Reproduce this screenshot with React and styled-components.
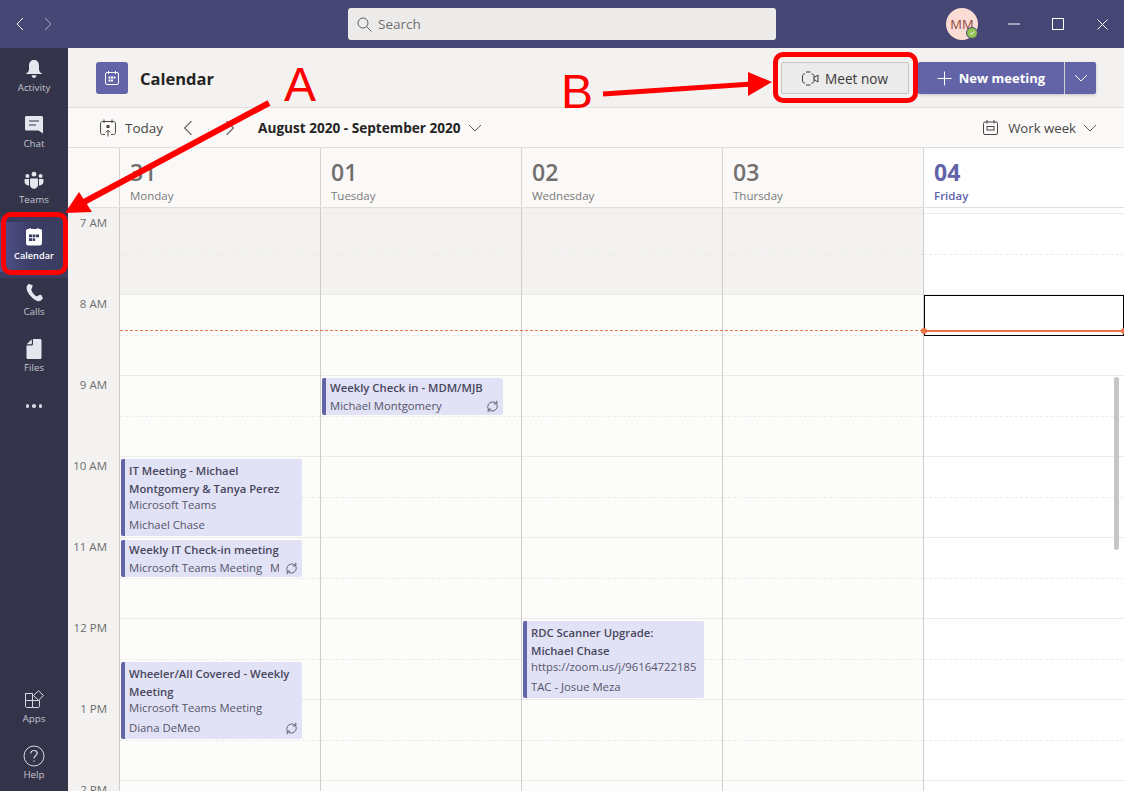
import React from 'react';
import styled, { createGlobalStyle } from 'styled-components';

const GlobalStyle = createGlobalStyle`
  html, body { margin: 0; padding: 0; }
  body {
    font-family: "Open Sans", "Noto Sans", "Liberation Sans", sans-serif;
    overflow: hidden;
  }
`;

const Page = styled.div`
  position: relative;
  width: 1124px;
  height: 791px;
  overflow: hidden;
  display: flex;
  flex-direction: column;
  background: #f3f2f1;
`;

const TitleBar = styled.header`
  height: 48px;
  flex: none;
  background: #464775;
  display: grid;
  grid-template-columns: 1fr 428px 1fr;
  align-items: center;
`;

const HistoryNav = styled.div`
  display: flex;
  gap: 14px;
  padding-left: 13px;
  align-items: center;
`;

const SearchBox = styled.div`
  height: 32px;
  background: #ecebea;
  border-radius: 3px;
  display: flex;
  align-items: center;
  gap: 6px;
  padding-left: 9px;
  font-size: 13.5px;
  color: #6e6e6e;
`;

const TitleRight = styled.div`
  display: flex;
  justify-content: flex-end;
  align-items: center;
`;

const Avatar = styled.div`
  position: relative;
  width: 32px;
  height: 32px;
  border-radius: 50%;
  background: #fbdcd4;
  color: #8e4a3e;
  font-size: 13px;
  display: flex;
  align-items: center;
  justify-content: center;
  margin-right: 14px;
`;

const StatusBadge = styled.span`
  position: absolute;
  right: 0;
  bottom: 1px;
  width: 10px;
  height: 10px;
  border-radius: 50%;
  background: #92c353;
  border: 1px solid #464775;
  display: flex;
  align-items: center;
  justify-content: center;
`;

const WindowButton = styled.div`
  width: 44px;
  height: 48px;
  display: flex;
  align-items: center;
  justify-content: center;
`;

const Body = styled.div`
  flex: 1;
  display: flex;
  min-height: 0;
`;

const Rail = styled.nav`
  width: 68px;
  flex: none;
  background: #33344a;
  display: flex;
  flex-direction: column;
  justify-content: space-between;
`;

const RailGroup = styled.div`
  display: flex;
  flex-direction: column;
  gap: ${(p) => p.$gap}px;
  padding-top: ${(p) => p.$top || 0}px;
`;

const RailItem = styled.div`
  height: 50px;
  box-sizing: border-box;
  padding-top: 5px;
  display: flex;
  flex-direction: column;
  align-items: center;
  color: ${(p) => (p.$active ? '#ffffff' : '#c4c4cf')};
  background: ${(p) => (p.$active ? 'linear-gradient(90deg, #50528c 0%, #3d3e66 45%, #3a3b5e 100%)' : 'none')};
  box-shadow: ${(p) => (p.$active ? '0 -6px 0 #3a3b5e, 0 6px 0 #3a3b5e' : 'none')};
  font-size: ${(p) => (p.$active ? 9.2 : 9.8)}px;
  font-weight: ${(p) => (p.$active ? 600 : 400)};
  line-height: 12px;
`;

const RailIcon = styled.div`
  height: 20px;
  margin-bottom: 3px;
  display: flex;
  align-items: center;
  justify-content: center;
`;

const MoreDots = styled.div`
  height: 40px;
  display: flex;
  align-items: center;
  justify-content: center;
  gap: 3px;
  margin-top: -4px;
`;

const Dot = styled.span`
  width: 3.5px;
  height: 3.5px;
  border-radius: 50%;
  background: #d6d6de;
`;

const Main = styled.main`
  flex: 1;
  min-width: 0;
  display: flex;
  flex-direction: column;
`;

const PageHeader = styled.div`
  height: 60px;
  box-sizing: border-box;
  flex: none;
  border-bottom: 1px solid #e1dfdd;
  display: flex;
  align-items: center;
  padding: 1px 28px 0 28px;
`;

const AppTile = styled.div`
  width: 32px;
  height: 32px;
  background: #6264a7;
  border-radius: 3px;
  display: flex;
  align-items: center;
  justify-content: center;
  margin-right: 12px;
`;

const PageTitle = styled.h1`
  margin: 0;
  font-size: 16.5px;
  font-weight: 700;
  color: #252423;
  flex: 1;
`;

const MeetNow = styled.button`
  width: 128px;
  height: 32px;
  box-sizing: border-box;
  border: 1px solid #c8c6c4;
  border-radius: 2px;
  background: #ebebeb;
  color: #3b3a39;
  font: 500 13.6px "Open Sans", sans-serif;
  display: flex;
  align-items: center;
  justify-content: center;
  gap: 6px;
  margin-right: 9px;
  padding: 0;
`;

const NewMeeting = styled.button`
  width: 146px;
  height: 32px;
  border: 0;
  border-radius: 2px 0 0 2px;
  background: #6264a7;
  color: #fff;
  font: 700 13px "Open Sans", sans-serif;
  display: flex;
  align-items: center;
  justify-content: center;
  gap: 7px;
  padding: 0;
  box-shadow: 0 1px 3px rgba(0, 0, 0, 0.2);
`;

const NewMeetingMenu = styled.button`
  width: 31px;
  height: 32px;
  border: 0;
  margin-left: 1px;
  border-radius: 0 2px 2px 0;
  background: #6264a7;
  display: flex;
  align-items: center;
  justify-content: center;
  padding: 0;
  box-shadow: 0 1px 3px rgba(0, 0, 0, 0.2);
`;

const Toolbar = styled.div`
  height: 40px;
  box-sizing: border-box;
  flex: none;
  background: #faf9f8;
  border-bottom: 1px solid #e1dfdd;
  display: flex;
  align-items: center;
  padding: 0 27px 0 32px;
  font-size: 13.5px;
  color: #484644;
`;

const TodayLabel = styled.span`
  margin-left: 9px;
  margin-right: 17px;
`;

const RangeLabel = styled.span`
  font-weight: 700;
  font-size: 13.6px;
  color: #252423;
  margin-left: 20px;
  margin-right: 7px;
`;

const ToolbarSpacer = styled.div`
  flex: 1;
`;

const ArrowGap = styled.span`
  width: 26px;
`;

const ViewLabel = styled.span`
  font-size: 13.2px;
  margin: 0 7px 0 10px;
`;

const DayHeaderRow = styled.div`
  height: 60px;
  box-sizing: border-box;
  flex: none;
  display: grid;
  grid-template-columns: 51px repeat(5, 201px);
  border-bottom: 1px solid #e1dfdd;
  background: #faf9f8;
`;

const DayHead = styled.div`
  border-left: 1px solid #d6d4d2;
  padding: 8px 0 0 10px;
  background: ${(p) => (p.$today ? '#ffffff' : '#faf9f8')};
  color: ${(p) => (p.$today ? '#6264a7' : '#7a7977')};
`;

const DayNumber = styled.div`
  font-size: 23px;
  line-height: 32px;
  font-weight: ${(p) => (p.$today ? 700 : 550)};
  color: ${(p) => (p.$today ? '#6264a7' : '#706f6e')};
`;

const DayName = styled.div`
  font-size: 11.5px;
  line-height: 16px;
  font-weight: ${(p) => (p.$today ? 600 : 400)};
`;

const Grid = styled.div`
  position: relative;
  flex: 1;
  min-height: 0;
  overflow: hidden;
  display: grid;
  grid-template-columns: 51px repeat(5, 201px);
`;

const TimeColumn = styled.div`
  padding-top: 5px;
  background: #f3f2f1;
`;

const TimeLabel = styled.div`
  height: 81px;
  box-sizing: border-box;
  padding: 2px 12px 0 0;
  text-align: right;
  font-size: 11.5px;
  line-height: 16px;
  color: #6e6d6c;
`;

const DayColumn = styled.div`
  position: relative;
  border-left: 1px solid #d0cecc;
  background: ${(p) => (p.$today ? '#ffffff' : '#fcfcfb')};
`;

const LeadIn = styled.div`
  height: 5px;
  background: ${(p) => (p.$off ? '#f3f2f1' : 'transparent')};
`;

const HourSlot = styled.div`
  height: 81px;
  box-sizing: border-box;
  border-top: 1px solid #edebe9;
  background: ${(p) => (p.$off ? '#f3f2f1' : 'transparent')};
`;

const HalfLine = styled.div`
  height: 40px;
  border-bottom: 1px dashed #ecebe9;
`;

const Event = styled.div`
  position: absolute;
  left: 1px;
  top: ${(p) => p.$top}px;
  width: 181px;
  height: ${(p) => p.$height}px;
  box-sizing: border-box;
  background: #e2e2f6;
  border-left: 4px solid #6264a7;
  border-radius: 2px;
  padding: ${(p) => (p.$short ? 1 : 3)}px 4px 0 4px;
  color: #3f3f55;
  overflow: hidden;
`;

const EventTitle = styled.div`
  font-size: 11.3px;
  font-weight: 600;
  line-height: 18px;
  white-space: nowrap;
  color: #47475d;
`;

const EventLine = styled.div`
  font-size: 11.3px;
  line-height: 16px;
  margin-top: ${(p) => p.$gap || 0}px;
  display: flex;
  align-items: center;
  justify-content: space-between;
  gap: 6px;
  color: #55556a;
  margin-bottom: ${(p) => p.$after || 0}px;
`;

const Clip = styled.span`
  flex: 1;
  min-width: 0;
  overflow: hidden;
  white-space: nowrap;
`;

const NowDashed = styled.div`
  position: absolute;
  left: 52px;
  width: 803px;
  top: 122px;
  border-top: 1px dashed #e97548;
`;

const SelectedCell = styled.div`
  position: absolute;
  left: 0;
  right: 0;
  top: 87px;
  height: 41px;
  box-sizing: border-box;
  border: 1px solid #000;
  background: #fff;
`;

const NowSolid = styled.div`
  position: absolute;
  left: 0;
  right: 0;
  top: 122px;
  height: 2px;
  background: #e97548;
`;

const NowDot = styled.span`
  position: absolute;
  top: -2px;
  ${(p) => (p.$end ? 'right: -3px;' : 'left: -3px;')}
  width: 6px;
  height: 6px;
  border-radius: 50%;
  background: #e97548;
`;

const ScrollThumb = styled.div`
  position: absolute;
  right: 5px;
  top: 169px;
  width: 5px;
  height: 173px;
  border-radius: 3px;
  background: #c8c6c4;
`;

const Annotations = styled.svg`
  position: absolute;
  left: 0;
  top: 0;
  pointer-events: none;
`;

const CalloutBox = styled.div`
  position: absolute;
  left: ${(p) => p.$x}px;
  top: ${(p) => p.$y}px;
  width: ${(p) => p.$w}px;
  height: ${(p) => p.$h}px;
  box-sizing: border-box;
  border: 5px solid #ff0000;
  border-radius: 10px;
`;

const CalloutLetter = styled.span`
  position: absolute;
  left: ${(p) => p.$x}px;
  top: ${(p) => p.$y}px;
  font: 400 48px/48px "Liberation Sans", sans-serif;
  color: #ff0000;
`;

const Chevron = ({ dir = 'down', size = 14, color = '#605e5c' }) => {
  const paths = {
    down: 'M1 4 L7 10 L13 4',
    left: 'M10 1 L4 7 L10 13',
    right: 'M4 1 L10 7 L4 13',
  };
  return (
    <svg width={size} height={size} viewBox="0 0 14 14" fill="none">
      <path d={paths[dir]} stroke={color} strokeWidth="1" />
    </svg>
  );
};

const BellIcon = () => (
  <svg width="20" height="20" viewBox="0 0 20 20" fill="#e6e6ee">
    <path d="M10 1C6.6 1 5 3.6 5 6.8V10.5C5 12.5 3.6 13.4 1.6 15H18.4C16.4 13.4 15 12.5 15 10.5V6.8C15 3.6 13.4 1 10 1Z" />
    <path d="M7.6 16.2H12.4C12.2 18 11.2 19 10 19C8.8 19 7.8 18 7.6 16.2Z" />
  </svg>
);

const ChatIcon = () => (
  <svg width="20" height="20" viewBox="0 0 20 20">
    <path fill="#e6e6ee" d="M2.5 1H17.5C18.4 1 19 1.6 19 2.5V18.5L14.5 15.5H2.5C1.6 15.5 1 14.9 1 14V2.5C1 1.6 1.6 1 2.5 1Z" />
    <path stroke="#33344a" strokeWidth="1.2" d="M5 6H15M5 10H12" />
  </svg>
);

const TeamsIcon = () => (
  <svg width="20" height="20" viewBox="0 0 20 20" fill="#e6e6ee">
    <circle cx="10" cy="3.2" r="2.4" />
    <circle cx="3.4" cy="5" r="2" />
    <circle cx="16.6" cy="5" r="2" />
    <path d="M6 7.4H14V13.5C14 16 12.2 17.8 10 17.8C7.8 17.8 6 16 6 13.5Z" />
    <path d="M0.6 8H5V13.5L5.2 14.6C2.6 14.6 0.6 13 0.6 11Z" />
    <path d="M19.4 8H15V13.5L14.8 14.6C17.4 14.6 19.4 13 19.4 11Z" />
  </svg>
);

const CalendarFilledIcon = () => (
  <svg width="20" height="20" viewBox="0 0 20 20">
    <path fill="#fff" d="M4 2H5.5V1H6.8V2H13.2V1H14.5V2H16C17.2 2 18 2.8 18 4V16C18 17.2 17.2 18.5 16 18.5H4C2.8 18.5 2 17.2 2 16V4C2 2.8 2.8 2 4 2Z" />
    <path fill="#3a3b5e" d="M5 7.5H8.3V10.3H5ZM8.9 7.5H11.1V10.3H8.9ZM11.7 7.5H15V10.3H11.7ZM5 11.2H8.3V14H5ZM8.9 11.2H11.1V14H8.9Z" />
  </svg>
);

const PhoneIcon = () => (
  <svg width="20" height="20" viewBox="0 0 20 20" fill="#e6e6ee">
    <path d="M5.2 1L8 1.9C8.6 2.1 8.8 2.7 8.6 3.2L7.5 6C7.2 6.6 7.3 7.1 7.6 7.8C8.5 10 10 11.8 12 12.9C12.6 13.2 13.1 13.2 13.6 12.9L15.8 11.8C16.3 11.6 16.8 11.7 17.2 12.1L18.6 14.4C19 15 18.8 15.6 18.4 16C17 17.6 15.6 18.4 14 18.2C9.4 17.4 3.2 10.4 2.6 5.6C2.4 3.8 3 2.4 4 1.4C4.3 1 4.8 0.9 5.2 1Z" />
  </svg>
);

const FileIcon = () => (
  <svg width="20" height="22" viewBox="0 0 20 22" fill="#e6e6ee">
    <path d="M9 1H16C17 1 17.5 1.6 17.5 2.5V19.5C17.5 20.4 17 21 16 21H4C3 21 2.5 20.4 2.5 19.5V7.5H7.5C8.4 7.5 9 6.9 9 6Z" />
    <path d="M7.8 1.2V5.6C7.8 6 7.5 6.3 7.1 6.3H2.7Z" />
  </svg>
);

const AppsIcon = () => (
  <svg width="22" height="20" viewBox="0 0 22 20" fill="none" stroke="#d8d8e0" strokeWidth="1">
    <path d="M2.5 3.5H9.5V10.5H2.5ZM2.5 10.5V16C2.5 17 3 17.5 4 17.5H9.5V10.5M9.5 10.5H16.5V16C16.5 17 16 17.5 15 17.5H9.5" />
    <path d="M2.5 5V3.5H9.5" />
    <path d="M15.5 0.8L20.5 5.5L15.5 10.2L10.5 5.5Z" />
  </svg>
);

const HelpIcon = () => (
  <svg width="22" height="22" viewBox="0 0 22 22" fill="none" stroke="#d8d8e0" strokeWidth="1">
    <circle cx="11" cy="11" r="10" />
    <path d="M7.8 8.4C7.8 6.6 9.2 5.5 11 5.5C12.8 5.5 14.2 6.6 14.2 8.3C14.2 10.6 11 10.6 11 13.5" strokeWidth="1.2" />
    <circle cx="11" cy="16" r="0.7" fill="#d8d8e0" stroke="none" />
  </svg>
);

const TileCalendarIcon = () => (
  <svg width="16" height="16" viewBox="0 0 16 16" fill="none" stroke="#fff" strokeWidth="1">
    <rect x="1.5" y="2.5" width="13" height="12" rx="1.5" />
    <path d="M4.5 1V4M11.5 1V4" />
    <path fill="#fff" stroke="none" d="M4.5 6.5H6.5V8.5H4.5ZM7 6.5H9V8.5H7ZM9.5 6.5H11.5V8.5H9.5ZM4.5 9.5H6.5V11.5H4.5ZM7 9.5H9V11.5H7Z" />
  </svg>
);

const SearchIcon = () => (
  <svg width="15" height="15" viewBox="0 0 15 15" fill="none" stroke="#5f5f5f" strokeWidth="1">
    <circle cx="6" cy="6" r="5" />
    <path d="M9.6 9.6L14.5 14.5" />
  </svg>
);

const VideoIcon = () => (
  <svg width="17" height="15" viewBox="0 0 17 15" fill="none" stroke="#3b3a39" strokeWidth="1">
    <path d="M3 3H2.5C1.4 3 0.5 3.9 0.5 5V10C0.5 11.1 1.4 12 2.5 12H3M9.5 3H10C11.1 3 12 3.9 12 5V10C12 11.1 11.1 12 10 12H9.5" />
    <path d="M12 6.5L16 4V11L12 8.5" />
    <path d="M4 1H8.5M4 14H8.5" />
  </svg>
);

const PlusIcon = () => (
  <svg width="15" height="15" viewBox="0 0 15 15" stroke="#fff" strokeWidth="1">
    <path d="M7.5 0.5V14.5M0.5 7.5H14.5" />
  </svg>
);

const TodayIcon = () => (
  <svg width="16" height="18" viewBox="0 0 16 18" fill="none" stroke="#484644" strokeWidth="1">
    <path d="M5 15.5H2.5C1.4 15.5 0.5 14.7 0.5 13.5V4.5C0.5 3.3 1.4 2.5 2.5 2.5H13.5C14.6 2.5 15.5 3.3 15.5 4.5V13.5C15.5 14.7 14.6 15.5 13.5 15.5H11" />
    <path d="M4 0.5V4M12 0.5V4" />
    <rect x="6.5" y="6" width="3" height="3" fill="#484644" stroke="none" />
    <path d="M8 17.5V11.5M5.8 13.5L8 11.3L10.2 13.5" />
  </svg>
);

const WorkWeekIcon = () => (
  <svg width="15" height="15" viewBox="0 0 15 15" fill="none" stroke="#484644" strokeWidth="1">
    <rect x="0.5" y="2" width="14" height="12.5" rx="1.5" />
    <path d="M4 0V3.5M11 0V3.5" />
    <rect x="4" y="6.5" width="7" height="3.5" />
  </svg>
);

const RepeatGlyph = styled.svg`
  flex: none;
`;

const RepeatIcon = () => (
  <RepeatGlyph width="13" height="13" viewBox="0 0 13 13" fill="none" stroke="#4b4b60" strokeWidth="0.9">
    <path d="M2 8.5C1.2 5.8 2.6 2.4 6.5 2C8 1.9 9.4 2.4 10.4 3.6" />
    <path d="M11 4.5C11.8 7.2 10.4 10.6 6.5 11C5 11.1 3.6 10.6 2.6 9.4" />
    <path d="M10.8 0.8V3.9H7.8M2.2 12.2V9.1H5.2" />
  </RepeatGlyph>
);

const railTop = [
  ['Activity', <BellIcon />],
  ['Chat', <ChatIcon />],
  ['Teams', <TeamsIcon />],
  ['Calendar', <CalendarFilledIcon />],
  ['Calls', <PhoneIcon />],
  ['Files', <FileIcon />],
];

const days = [
  { num: '31', name: 'Monday' },
  { num: '01', name: 'Tuesday' },
  { num: '02', name: 'Wednesday' },
  { num: '03', name: 'Thursday' },
  { num: '04', name: 'Friday', today: true },
];

const hours = ['7 AM', '8 AM', '9 AM', '10 AM', '11 AM', '12 PM', '1 PM', '2 PM'];

// tops are relative to the grid, which starts at y=208
const events = {
  0: [
    { top: 251, height: 77, title: ['IT Meeting - Michael', 'Montgomery & Tanya Perez'], sub: 'Microsoft Teams', org: 'Michael Chase' },
    { top: 332, height: 37, short: true, title: ['Weekly IT Check-in meeting'], sub: 'Microsoft Teams Meeting\u00a0\u00a0\u2009Michael Chase', repeat: true },
    { top: 454, height: 77, title: ['Wheeler/All Covered - Weekly', 'Meeting'], sub: 'Microsoft Teams Meeting', org: 'Diana DeMeo', repeat: true },
  ],
  1: [
    { top: 170, height: 37, short: true, title: ['Weekly Check in - MDM/MJB'], sub: 'Michael Montgomery', repeat: true },
  ],
  2: [
    { top: 413, height: 77, title: ['RDC Scanner Upgrade:', 'Michael Chase'], sub: 'https://zoom.us/j/96164722185', org: 'TAC - Josue Meza' },
  ],
};

function CalendarEvent({ ev }) {
  return (
    <Event $top={ev.top} $height={ev.height} $short={ev.short}>
      {ev.title.map((t) => (
        <EventTitle key={t}>{t}</EventTitle>
      ))}
      <EventLine $gap={ev.short ? 1 : -1} $after={ev.org ? 4 : 0}>
        <Clip>{ev.sub}</Clip>
        {!ev.org && ev.repeat && <RepeatIcon />}
      </EventLine>
      {ev.org && (
        <EventLine>
          <Clip>{ev.org}</Clip>
          {ev.repeat && <RepeatIcon />}
        </EventLine>
      )}
    </Event>
  );
}

export default function App() {
  return (
    <Page>
      <GlobalStyle />
      <TitleBar>
        <HistoryNav>
          <Chevron dir="left" color="#ffffff" />
          <Chevron dir="right" color="#a6a7c4" />
        </HistoryNav>
        <SearchBox>
          <SearchIcon />
          Search
        </SearchBox>
        <TitleRight>
          <Avatar>
            MM
            <StatusBadge>
              <svg width="6" height="6" viewBox="0 0 6 6" fill="none" stroke="#fff" strokeWidth="1">
                <path d="M1 3L2.5 4.5L5 1.5" />
              </svg>
            </StatusBadge>
          </Avatar>
          <WindowButton>
            <svg width="12" height="2" viewBox="0 0 12 2" stroke="#fff"><path d="M0 1H12" /></svg>
          </WindowButton>
          <WindowButton>
            <svg width="12" height="12" viewBox="0 0 12 12" fill="none" stroke="#fff"><rect x="0.5" y="0.5" width="11" height="11" /></svg>
          </WindowButton>
          <WindowButton>
            <svg width="11" height="11" viewBox="0 0 11 11" stroke="#fff"><path d="M0.5 0.5L10.5 10.5M10.5 0.5L0.5 10.5" /></svg>
          </WindowButton>
        </TitleRight>
      </TitleBar>

      <Body>
        <Rail>
          <RailGroup $gap={6} $top={6}>
            {railTop.map(([label, icon]) => (
              <RailItem key={label} $active={label === 'Calendar'}>
                <RailIcon>{icon}</RailIcon>
                {label}
              </RailItem>
            ))}
            <MoreDots>
              <Dot />
              <Dot />
              <Dot />
            </MoreDots>
          </RailGroup>
          <RailGroup $gap={6}>
            <RailItem>
              <RailIcon><AppsIcon /></RailIcon>
              Apps
            </RailItem>
            <RailItem>
              <RailIcon><HelpIcon /></RailIcon>
              Help
            </RailItem>
          </RailGroup>
        </Rail>

        <Main>
          <PageHeader>
            <AppTile><TileCalendarIcon /></AppTile>
            <PageTitle>Calendar</PageTitle>
            <MeetNow><VideoIcon />Meet now</MeetNow>
            <NewMeeting><PlusIcon />New meeting</NewMeeting>
            <NewMeetingMenu><Chevron color="#ffffff" /></NewMeetingMenu>
          </PageHeader>

          <Toolbar>
            <TodayIcon />
            <TodayLabel>Today</TodayLabel>
            <Chevron dir="left" size={16} />
            <ArrowGap />
            <Chevron dir="right" size={16} />
            <RangeLabel>August 2020 - September 2020</RangeLabel>
            <Chevron />
            <ToolbarSpacer />
            <WorkWeekIcon />
            <ViewLabel>Work week</ViewLabel>
            <Chevron />
          </Toolbar>

          <DayHeaderRow>
            <div />
            {days.map((d) => (
              <DayHead key={d.num} $today={d.today}>
                <DayNumber $today={d.today}>{d.num}</DayNumber>
                <DayName $today={d.today}>{d.name}</DayName>
              </DayHead>
            ))}
          </DayHeaderRow>

          <Grid>
            <TimeColumn>
              {hours.map((h) => (
                <TimeLabel key={h}>{h}</TimeLabel>
              ))}
            </TimeColumn>
            {days.map((d, i) => (
              <DayColumn key={d.num} $today={d.today}>
                <LeadIn $off={!d.today} />
                {hours.map((h, j) => (
                  <HourSlot key={h} $off={j === 0 && !d.today}>
                    <HalfLine />
                  </HourSlot>
                ))}
                {(events[i] || []).map((ev) => (
                  <CalendarEvent key={ev.title[0]} ev={ev} />
                ))}
                {d.today && (
                  <>
                    <SelectedCell />
                    <NowSolid>
                      <NowDot />
                      <NowDot $end />
                    </NowSolid>
                    <ScrollThumb />
                  </>
                )}
              </DayColumn>
            ))}
            <NowDashed />
          </Grid>
        </Main>
      </Body>

      <CalloutBox $x={1} $y={212} $w={67} $h={63} />
      <CalloutBox $x={773} $y={52} $w={145} $h={51} />
      <CalloutLetter $x={284} $y={61}>A</CalloutLetter>
      <CalloutLetter $x={561} $y={68}>B</CalloutLetter>
      <Annotations width="1124" height="791" viewBox="0 0 1124 791">
        <path d="M269 103L84 202" stroke="#ff0000" strokeWidth="6" />
        <path d="M65 213L79 192L92 212Z" fill="#ff0000" />
        <path d="M603 94L752 84" stroke="#ff0000" strokeWidth="5" />
        <path d="M772 82L748 72L748 96Z" fill="#ff0000" />
      </Annotations>
    </Page>
  );
}
